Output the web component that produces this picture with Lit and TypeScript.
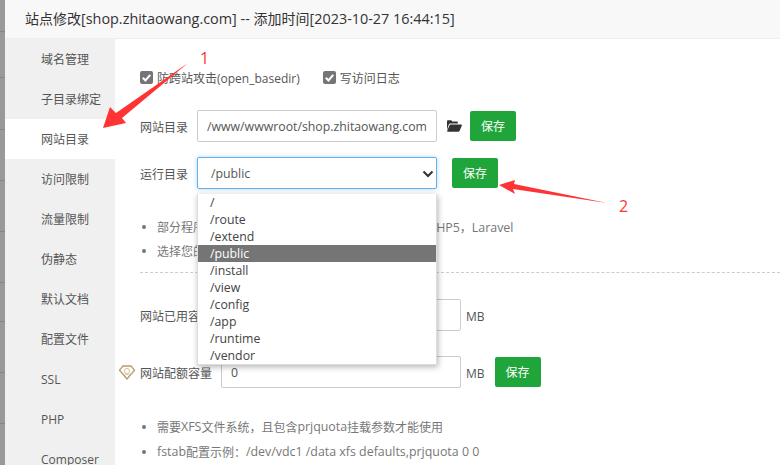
import { LitElement, html, css, svg } from "lit";
import { customElement } from "lit/decorators.js";

const MENU = ["域名管理", "子目录绑定", "网站目录", "访问限制", "流量限制", "伪静态", "默认文档", "配置文件", "SSL", "PHP", "Composer"];
const OPTIONS = ["/", "/route", "/extend", "/public", "/install", "/view", "/config", "/app", "/runtime", "/vendor"];
const STRIP = [32, 46, 52, 51, 51, 51, 39, 51, 51, 60];

const check = svg`<svg class="tick" viewBox="0 0 14 14"><path d="M3 7.2 5.9 10.2 11 4.2" fill="none" stroke="#fff" stroke-width="2.2"/></svg>`;

@customElement("app-root")
export class AppRoot extends LitElement {
  static styles = css`
    :host { display: block; width: 780px; height: 465px; overflow: hidden; font-family: "Open Sans", "Noto Sans CJK SC", sans-serif; font-size: 12px; color: #555; }
    .page { display: flex; width: 780px; height: 465px; position: relative; overflow: hidden; background: #fff; }
    .strip { width: 5px; flex: none; background: #999; display: flex; flex-direction: column; }
    .strip div { border-bottom: 1px solid #858585; box-sizing: border-box; flex: none; }
    .dialog { flex: 1; min-width: 0; display: flex; flex-direction: column; }
    .title { height: 38px; flex: none; box-sizing: content-box; background: #f8f8f8; border-bottom: 1px solid #eee; padding-left: 20px; line-height: 38px; font-size: 14px; color: #333; white-space: nowrap; }
    .title span { font-size: 14.4px; }
    .body { display: flex; flex: 1; min-height: 0; }
    .menu { width: 110px; flex: none; background: #f0f0f0; }
    .menu div { height: 40px; line-height: 42px; padding-left: 36px; color: #555; white-space: nowrap; }
    .menu div.on { background: #fff; }
    .main { flex: 1; min-width: 0; padding: 28px 0 0 25px; }
    .checks { display: flex; align-items: center; height: 20px; }
    .checks span.t { margin-left: 4px; padding-top: 2px; white-space: nowrap; }
    .box { width: 13px; height: 13px; border-radius: 2px; background: #757575; display: block; flex: none; }
    .tick { width: 13px; height: 13px; display: block; }
    .box.second { margin-left: 23px; }
    .row { display: flex; align-items: center; height: 32px; }
    .r1 { margin-top: 23px; }
    .r2 { margin-top: 15px; }
    .r3 { margin-top: 26px; }
    .r4 { margin-top: 25px; position: relative; }
    .label { margin-right: 9px; padding-top: 2px; white-space: nowrap; }
    .field { width: 240px; height: 32px; box-sizing: border-box; border: 1px solid #ccc; border-radius: 2px; padding-left: 9px; line-height: 32px; color: #555; font-size: 12.3px; white-space: nowrap; background: #fff; }
    .selwrap { position: relative; width: 240px; height: 32px; }
    .select { border-color: #66afe9; padding: 1px 1px 0 13px; box-shadow: 0 0 4px rgba(102,175,233,.5); display: flex; align-items: center; justify-content: space-between; line-height: 30px; }
    .chev { width: 14px; height: 10px; display: block; }
    .list { position: absolute; left: 0; top: 37px; width: 240px; box-sizing: border-box; background: #fff; border: 1px solid #ddd; border-width: 0 1px 1px 1px; box-shadow: 1px 2px 6px rgba(0,0,0,.3); z-index: 2; font-size: 12.3px; color: #444; }
    .list div { height: 17px; line-height: 18px; padding-left: 12px; }
    .list div.on { background: #757575; color: #fff; }
    .btn { width: 46px; height: 30px; background: #20a53a; color: #fff; border-radius: 2px; text-align: center; line-height: 32px; flex: none; }
    .folder { width: 15px; height: 12px; margin: 0 8px 0 10px; display: block; flex: none; }
    .b2 { margin-left: 15px; }
    .unit { margin-left: 5px; padding-top: 2px; white-space: nowrap; }
    .b4 { margin-left: 10px; }
    .gem { position: absolute; left: -22px; top: 9px; width: 18px; height: 15px; }
    ul { list-style: none; margin: 0; padding: 0; color: #777; }
    li { display: flex; align-items: center; height: 24px; box-sizing: border-box; padding-top: 2px; white-space: pre; }
    li::before { content: ""; width: 4px; height: 4px; border-radius: 50%; background: #777; margin: 0 11px 0 2px; flex: none; }
    li span { font-size: 12.4px; }
    .n1 { margin-top: 25px; }
    .n2 { margin-top: 25px; }
    .n2 li { height: 25px; }
    hr { border: 0; border-top: 1px dashed #ccc; margin: 10px 0 0; height: 0; }
    .marks { position: absolute; inset: 0; width: 780px; height: 465px; z-index: 3; pointer-events: none; }
    .num { position: absolute; color: #f33; font-size: 16px; line-height: 20px; z-index: 3; }
    .n-a { left: 200px; top: 48px; }
    .n-b { left: 619px; top: 196px; }
  `;

  render() {
    return html`<div class="page">
      <div class="strip">${STRIP.map((h) => html`<div style="height:${h}px"></div>`)}</div>
      <div class="dialog">
        <div class="title">站点修改<span>[shop.zhitaowang.com] -- </span>添加时间<span>[2023-10-27 16:44:15]</span></div>
        <div class="body">
          <div class="menu">${MENU.map((m, i) => html`<div class=${i === 2 ? "on" : ""}>${m}</div>`)}</div>
          <div class="main">
            <div class="checks">
              <span class="box">${check}</span><span class="t">防跨站攻击(open_basedir)</span>
              <span class="box second">${check}</span><span class="t">写访问日志</span>
            </div>
            <div class="row r1">
              <span class="label">网站目录</span>
              <div class="field">/www/wwwroot/shop.zhitaowang.com</div>
              <svg class="folder" viewBox="0 0 15 12"><path d="M0 10V1.5C0 .7.5.2 1.2.2h2.6c.7 0 1.1.5 1.3 1.2h4.6c.7 0 1.2.5 1.2 1.2v1H3.4C2.6 3.6 2 4 1.7 4.7zM3.6 4.5H14c.7 0 1.1.6.8 1.2l-2.3 5.3c-.2.5-.6.8-1.2.8H.9c-.6 0-.9-.5-.7-1l2.2-5.4c.2-.6.6-.9 1.2-.9z" fill="#333"/></svg>
              <div class="btn">保存</div>
            </div>
            <div class="row r2">
              <span class="label">运行目录</span>
              <div class="selwrap">
                <div class="field select">
                  <span>/public</span>
                  <svg class="chev" viewBox="0 0 14 10"><path d="M2.5 2.5 7 7l4.5-4.5" fill="none" stroke="#333" stroke-width="2"/></svg>
                </div>
                <div class="list">${OPTIONS.map((o) => html`<div class=${o === "/public" ? "on" : ""}>${o}</div>`)}</div>
              </div>
              <div class="btn b2">保存</div>
            </div>
            <ul class="n1">
              <li>部分程序需要指定二级目录作为运行目录，如<span>ThinkPHP5</span>，<span>Laravel</span></li>
              <li>选择您的运行目录，点保存即可</li>
            </ul>
            <hr />
            <div class="row r3">
              <span class="label">网站已用容量</span>
              <div class="field"></div>
              <span class="unit">MB</span>
            </div>
            <div class="row r4">
              <svg class="gem" viewBox="0 0 17 15"><path d="M4.5 1h8L16 5.2 8.5 14 1 5.2z" fill="#fffdf8" stroke="#b69a68" stroke-width="1.3"/><circle cx="8.5" cy="6" r="2.6" fill="none" stroke="#d2bf9a" stroke-width=".9"/><path d="M6 9.2h5" stroke="#d2bf9a" stroke-width=".9"/></svg>
              <span class="label">网站配额容量</span>
              <div class="field">0</div>
              <span class="unit">MB</span>
              <div class="btn b4">保存</div>
            </div>
            <ul class="n2">
              <li>需要<span>XFS</span>文件系统，且包含<span>prjquota</span>挂载参数才能使用</li>
              <li><span>fstab</span>配置示例：<span>/dev/vdc1 /data xfs defaults,prjquota 0 0</span></li>
            </ul>
          </div>
        </div>
      </div>
      <svg class="marks" viewBox="0 0 780 465">
        <path d="M103 128 110 107 116 113 188 63 122 118 126 123z" fill="#f33"/>
        <path d="M499 185 515 180 514 184 607 203 513 189 515 194z" fill="#f33"/>
      </svg>
      <span class="num n-a">1</span>
      <span class="num n-b">2</span>
    </div>`;
  }
}
